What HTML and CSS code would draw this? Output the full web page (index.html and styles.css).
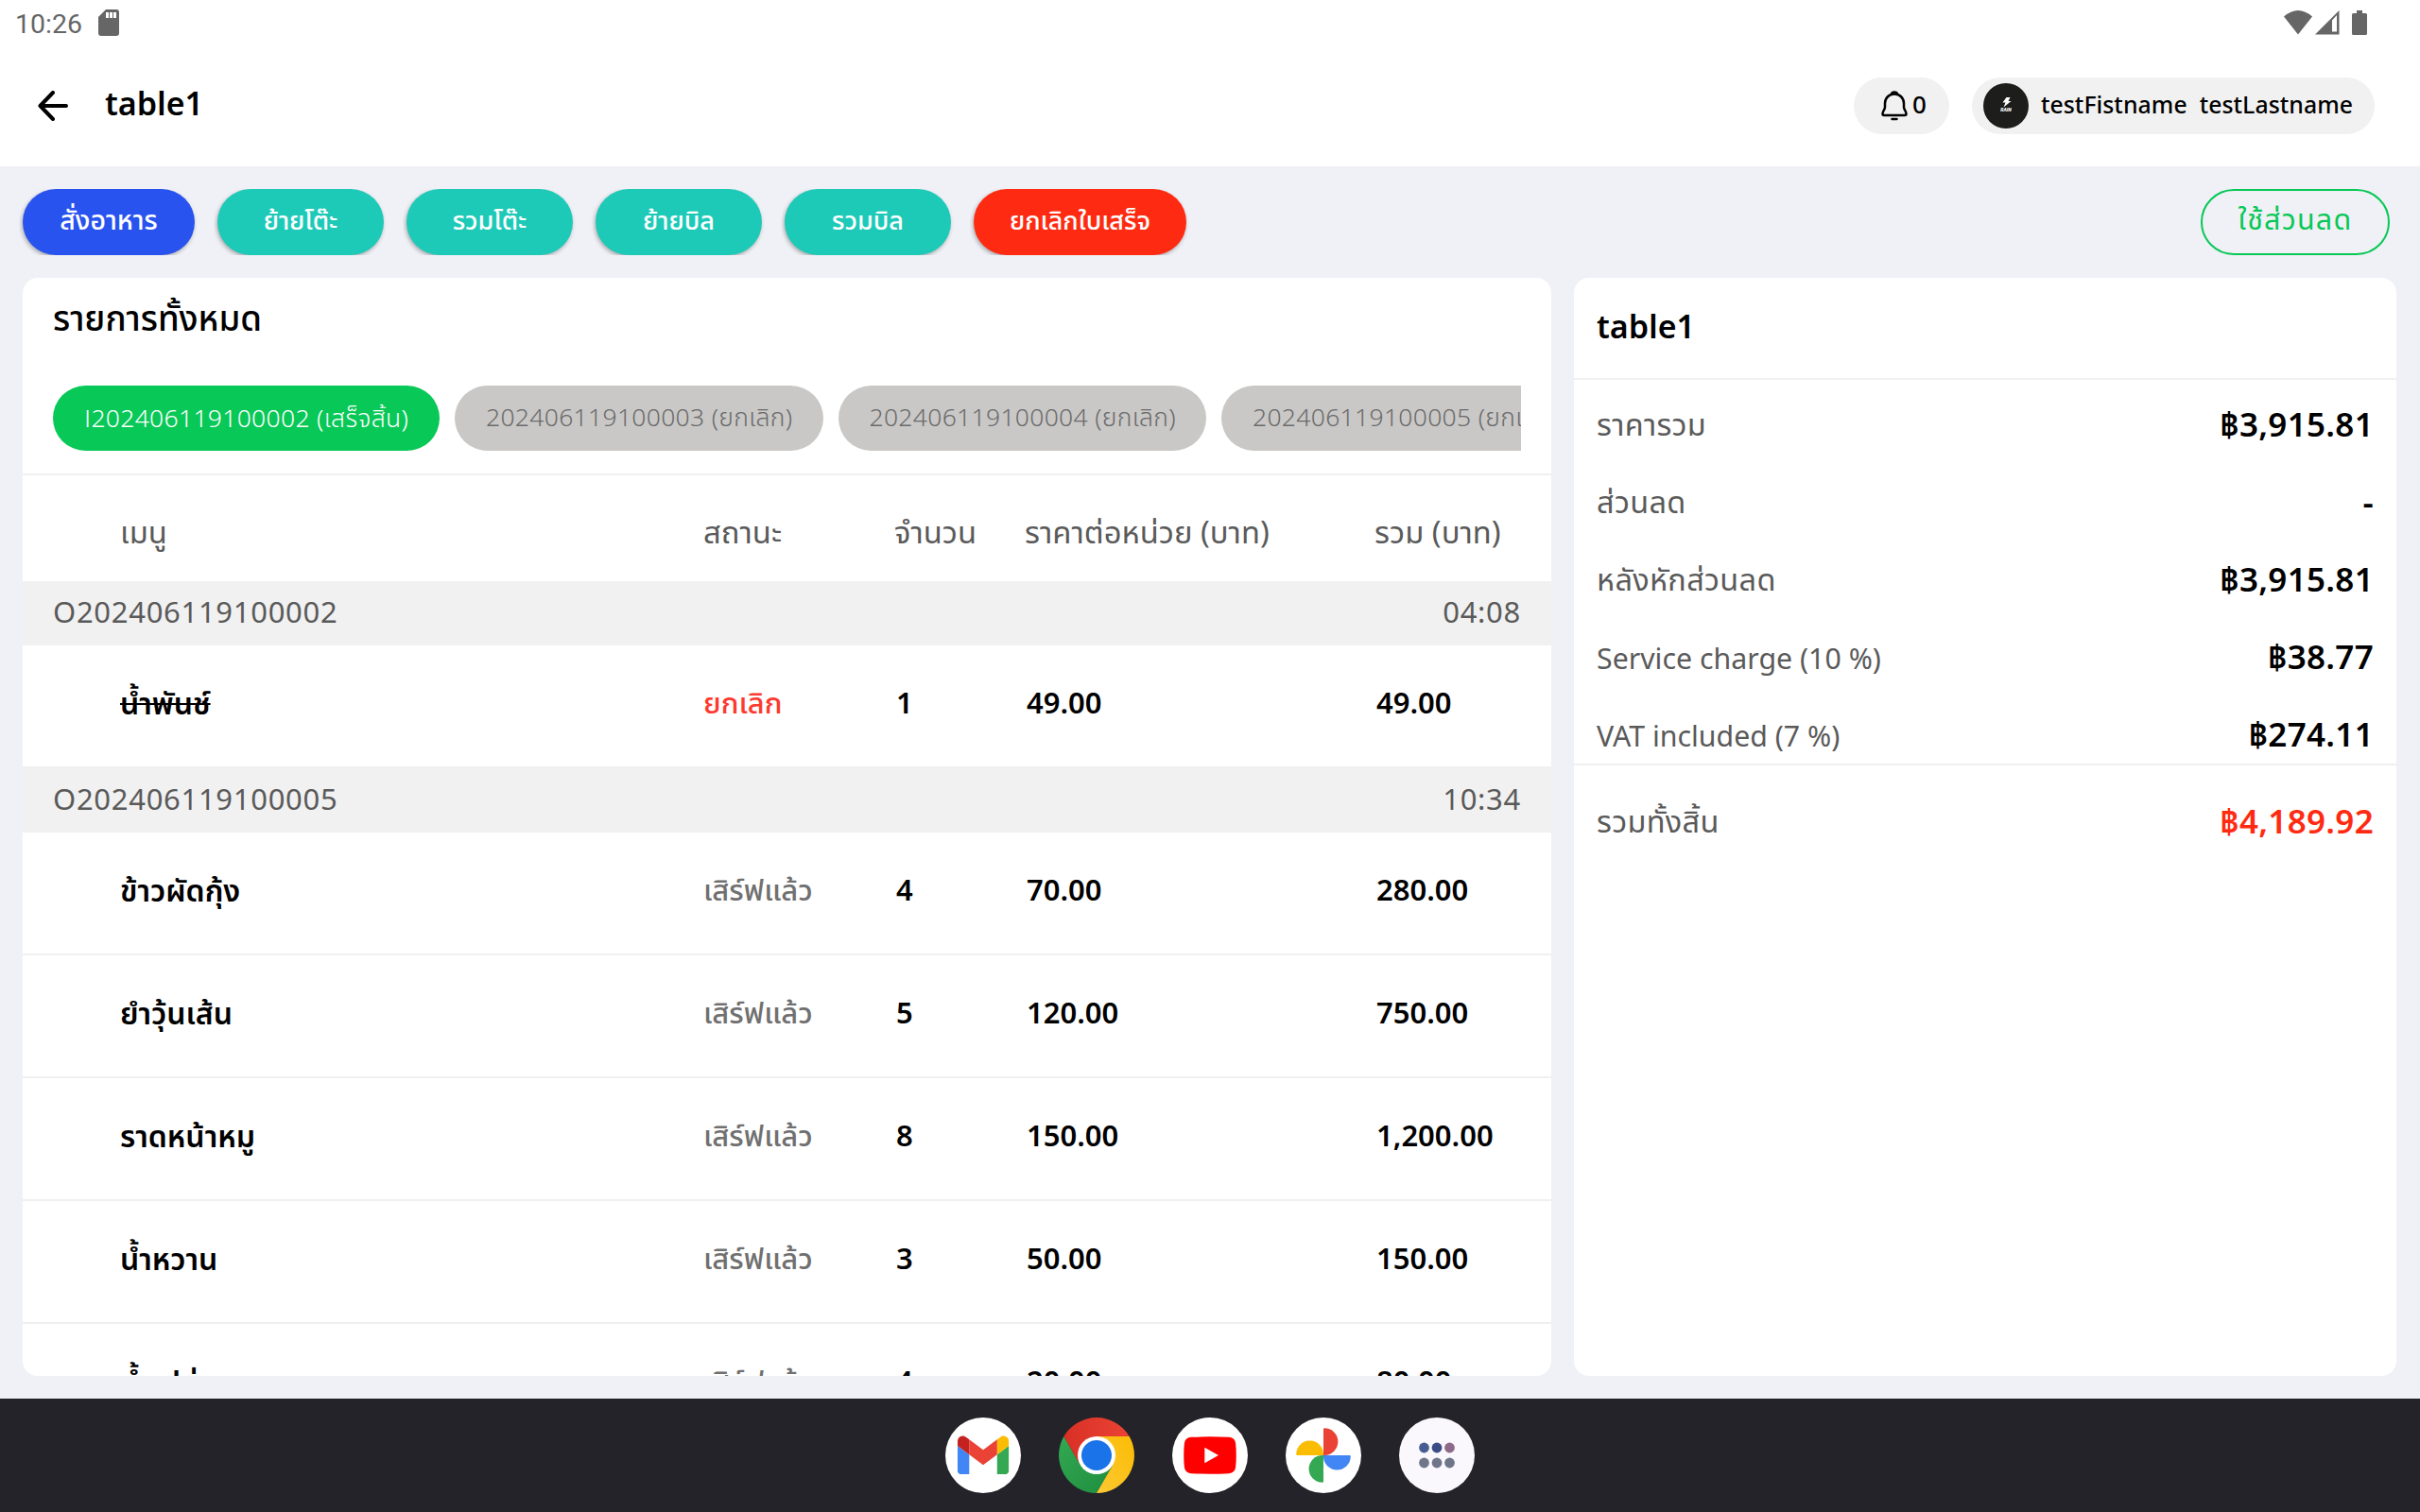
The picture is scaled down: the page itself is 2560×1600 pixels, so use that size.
FILE: index.html
```html
<!DOCTYPE html>
<html lang="th">
<head>
<meta charset="utf-8">
<title>table1</title>
<link rel="stylesheet" href="styles.css">
</head>
<body>
<div class="screen">
  <div class="statusbar">
    <span class="clock">10:26</span>
    <svg class="sd" width="22" height="28" viewBox="0 0 22 28"><path d="M8 0H19a3 3 0 0 1 3 3V25a3 3 0 0 1-3 3H3a3 3 0 0 1-3-3V8ZM8 3v6h3V3Zm4 0v6h3V3Zm4 0v6h3V3Z" fill="#666" fill-rule="evenodd"/></svg>
    <div class="system">
      <svg width="30" height="26" viewBox="0 0 30 26"><path d="M0 6.500Q15-6.500 30 6.500L15 25.500Z" fill="#666"/></svg>
      <svg width="26" height="26" viewBox="0 0 26 26"><path d="M25.500 0V25.500H0ZM18 10.500V22.500h5V5Z" fill="#666" fill-rule="evenodd"/></svg>
      <svg class="battery" width="16" height="26" viewBox="0 0 16 26"><path d="M5 0h6v3h3.500A1.500 1.500 0 0 1 16 4.500v20a1.500 1.500 0 0 1-1.500 1.500h-13A1.500 1.500 0 0 1 0 24.500v-20A1.500 1.500 0 0 1 1.500 3H5Z" fill="#666"/></svg>
    </div>
  </div>

  <header class="appbar">
    <svg class="back" width="32" height="32" viewBox="0 0 32 32" fill="none" stroke="#000" stroke-width="4" stroke-linecap="round" stroke-linejoin="round"><path d="M30 16H2.500M16 2 2.500 16 16 30"/></svg>
    <h1 class="heading">table1</h1>
    <div class="pill bell">
      <svg width="28" height="32" viewBox="0 0 28 32" fill="none" stroke="#000" stroke-width="2.500" stroke-linecap="round" stroke-linejoin="round"><path d="M14 3.500C8.500 3.500 4 7.500 4 13.500V17.500C4 20 1.500 21.500 1.500 24.500Q1.500 26 3 26H25Q26.500 26 26.500 24.500C26.500 21.500 24 20 24 17.500V13.500C24 7.500 19.500 3.500 14 3.500Z"/><path d="M11 4Q11 1.500 14 1.500T17 4M11.500 30h5"/></svg>
      <span>0</span>
    </div>
    <div class="pill user">
      <svg width="48" height="48" viewBox="0 0 48 48"><circle cx="24" cy="24" r="24" fill="#1d1d1b"/><path d="M24.500 15h4l-2 4h3l-8 6.500 2-5h-3Z" fill="#fff"/><text x="24" y="29.800" text-anchor="middle" class="brand">RAIN</text></svg>
      <span class="name">testFistname  testLastname</span>
    </div>
  </header>

  <div class="actions">
    <div class="btn blue w182">สั่งอาหาร</div>
    <div class="btn teal w176">ย้ายโต๊ะ</div>
    <div class="btn teal w176">รวมโต๊ะ</div>
    <div class="btn teal w176">ย้ายบิล</div>
    <div class="btn teal w176">รวมบิล</div>
    <div class="btn red w225">ยกเลิกใบเสร็จ</div>
    <div class="btn outline">ใช้ส่วนลด</div>
  </div>

  <main class="content">
    <section class="card orders">
      <h2 class="title">รายการทั้งหมด</h2>
      <div class="chips">
        <div class="chip active"><span class="prefix">I</span>202406119100002 (เสร็จสิ้น)</div>
        <div class="chip">202406119100003 (ยกเลิก)</div>
        <div class="chip">202406119100004 (ยกเลิก)</div>
        <div class="chip">202406119100005 (ยกเลิก)</div>
      </div>
      <div class="grid head"><span>เมนู</span><span>สถานะ</span><span>จำนวน</span><span>ราคาต่อหน่วย (บาท)</span><span>รวม (บาท)</span></div>
      <div class="group"><span>O202406119100002</span><span>04:08</span></div>
      <div class="grid row"><span><s>น้ำพันช์</s></span><span class="cancel">ยกเลิก</span><span class="num">1</span><span class="num">49.00</span><span class="num">49.00</span></div>
      <div class="group"><span>O202406119100005</span><span>10:34</span></div>
      <div class="grid row"><span>ข้าวผัดกุ้ง</span><span class="served">เสิร์ฟแล้ว</span><span class="num">4</span><span class="num">70.00</span><span class="num">280.00</span></div>
      <div class="grid row"><span>ยำวุ้นเส้น</span><span class="served">เสิร์ฟแล้ว</span><span class="num">5</span><span class="num">120.00</span><span class="num">750.00</span></div>
      <div class="grid row"><span>ราดหน้าหมู</span><span class="served">เสิร์ฟแล้ว</span><span class="num">8</span><span class="num">150.00</span><span class="num">1,200.00</span></div>
      <div class="grid row"><span>น้ำหวาน</span><span class="served">เสิร์ฟแล้ว</span><span class="num">3</span><span class="num">50.00</span><span class="num">150.00</span></div>
      <div class="grid row"><span>น้ำเปล่า</span><span class="served">เสิร์ฟแล้ว</span><span class="num">4</span><span class="num">20.00</span><span class="num">80.00</span></div>
    </section>

    <aside class="card summary">
      <h2 class="heading table-name">table1</h2>
      <div class="lines">
        <div class="line"><span>ราคารวม</span><b>฿3,915.81</b></div>
        <div class="line"><span>ส่วนลด</span><b>-</b></div>
        <div class="line"><span>หลังหักส่วนลด</span><b>฿3,915.81</b></div>
        <div class="line"><span class="latin">Service charge (10 %)</span><b>฿38.77</b></div>
        <div class="line"><span class="latin">VAT included (7 %)</span><b>฿274.11</b></div>
      </div>
      <div class="line total"><span>รวมทั้งสิ้น</span><b>฿4,189.92</b></div>
    </aside>
  </main>

  <nav class="dock">
    <svg width="80" height="80" viewBox="0 0 80 80"><circle cx="40" cy="40" r="40" fill="#fff"/><g transform="translate(-19 -6.300) scale(.615)"><path fill="#4285f4" d="M58 108h14V74L52 59v43c0 3.320 2.690 6 6 6"/><path fill="#34a853" d="M120 108h14c3.320 0 6-2.690 6-6V59l-20 15"/><path fill="#fbbc04" d="M120 48v26l20-15v-8c0-7.420-8.470-11.650-14.400-7.200"/><path fill="#ea4335" d="M72 74V48l24 18 24-18v26L96 92"/><path fill="#c5221f" d="M52 51v8l20 15V48l-5.600-4.200c-5.940-4.450-14.400-.22-14.400 7.200"/></g></svg>
    <svg width="80" height="80" viewBox="0 0 80 80">
      <defs>
        <linearGradient id="cr"><stop offset="0" stop-color="#d93025"/><stop offset="1" stop-color="#ea4335"/></linearGradient>
        <linearGradient id="cy" x1="0" y1="1" x2="1" y2="0"><stop offset="0" stop-color="#fcc934"/><stop offset="1" stop-color="#fbbc04"/></linearGradient>
        <linearGradient id="cg" x1="1" y1="1" x2="0" y2="0"><stop offset="0" stop-color="#1e8e3e"/><stop offset="1" stop-color="#34a853"/></linearGradient>
      </defs>
      <path d="M5.400 20 22.700 50 40 60 57.300 50 40 80A40 40 0 0 1 5.400 20Z" fill="url(#cg)"/>
      <path d="M74.600 20A40 40 0 0 1 40 80L57.300 50 40 40V20Z" fill="url(#cy)"/>
      <path d="M5.400 20A40 40 0 0 1 74.600 20H40V40L22.700 50Z" fill="url(#cr)"/>
      <circle cx="40" cy="40" r="20" fill="#fff"/><circle cx="40" cy="40" r="16" fill="#1a73e8"/>
    </svg>
    <svg width="80" height="80" viewBox="0 0 80 80"><circle cx="40" cy="40" r="40" fill="#fff"/><path d="M20 20.800Q40 19.800 60 20.800Q66.500 21.200 67.200 28Q68.300 40 67.200 52Q66.500 58.800 60 59.200Q40 60.200 20 59.200Q13.500 58.800 12.800 52Q11.700 40 12.800 28Q13.500 21.200 20 20.800Z" fill="red"/><path d="M34.300 31.700 49 40 34.300 48.300Z" fill="#fff"/></svg>
    <svg width="80" height="80" viewBox="0 0 80 80"><circle cx="40" cy="40" r="40" fill="#fff"/><path d="M40 40V12.200a1 1 0 0 1 1-1A14.400 14.400 0 0 1 41 40Z" fill="#ea4335"/><path d="M40 40H67.800a1 1 0 0 1 1 1A14.400 14.400 0 0 1 40 41Z" fill="#4285f4"/><path d="M40 40V67.800a1 1 0 0 1-1 1A14.400 14.400 0 0 1 39 40Z" fill="#34a853"/><path d="M40 40H12.200a1 1 0 0 1-1-1A14.400 14.400 0 0 1 40 39Z" fill="#fbbc04"/></svg>
    <svg width="80" height="80" viewBox="0 0 80 80"><circle cx="40" cy="40" r="40" fill="#faf8fd"/><g fill="#6f768a"><circle cx="26.500" cy="32" r="5.400" fill="#475d92"/><circle cx="40" cy="32" r="5.400" fill="#3b4d84"/><circle cx="53.500" cy="32" r="5.400" fill="#8c6a88"/><circle cx="26.500" cy="48" r="5.400"/><circle cx="40" cy="48" r="5.400"/><circle cx="53.500" cy="48" r="5.400"/></g></svg>
  </nav>
</div>
</body>
</html>
```
FILE: styles.css
```css
* { box-sizing: border-box; }
body {
  margin: 0;
  font-family: "Noto Sans Thai", "Noto Sans", sans-serif;
  color: #000;
}
h1, h2 { margin: 0; }
svg { display: block; flex: none; }

.screen {
  width: 2560px;
  height: 1600px;
  display: flex;
  flex-direction: column;
  background: #f0f1f6;
  overflow: hidden;
}

/* system status bar */
.statusbar {
  height: 48px;
  padding: 0 56px 0 16px;
  display: flex;
  align-items: center;
  background: #fff;
}
.clock { font: 28.500px/48px Roboto, sans-serif; color: #666; width: 88px; padding-top: 4px; }
.system { margin-left: auto; display: flex; gap: 3px; }
.battery { margin-left: 10px; }

/* app bar */
.appbar {
  height: 128px;
  padding: 0 48px 0 40px;
  display: flex;
  align-items: center;
  background: #fff;
}
.heading { font-size: 34px; font-weight: 600; letter-spacing: 0; line-height: 48px; }
.appbar .heading { margin-left: 39px; flex: 1; }
.pill {
  height: 60px;
  border-radius: 30px;
  background: #f1f1f1;
  display: flex;
  align-items: center;
}
.bell { width: 101px; padding-left: 29px; gap: 5px; font-size: 26px; font-weight: 500; margin-right: 24px; }
.user { width: 426px; padding-left: 12px; gap: 13px; }
.name { font-size: 24.800px; font-weight: 500; white-space: pre; letter-spacing: 0.050px; }
.brand { font: italic 900 5px Roboto, sans-serif; fill: #fff; }

/* action buttons */
.actions { display: flex; padding: 24px 32px 24px 24px; gap: 24px; }
.btn {
  height: 70px;
  border-radius: 35px;
  text-align: center;
  line-height: 69px;
  font-size: 27px;
  font-weight: 500;
  color: #fff;
  box-shadow: -1px 2px 4px rgba(0, 0, 0, 0.3);
  clip-path: inset(0 -4px);
}
.w182 { width: 182px; font-size: 28.500px; }
.w176 { width: 176px; }
.w225 { width: 225px; }
.blue { background: #2853ee; }
.teal { background: #1dcab8; }
.red { background: #fe2b12; }
.outline {
  width: 200px;
  margin-left: auto;
  border: 2px solid #08c857;
  color: #08c857;
  line-height: 64px;
  font-size: 30.500px;
  font-weight: 400;
  letter-spacing: 1.200px;
  box-shadow: none;
}

/* cards */
.content { display: flex; gap: 24px; padding: 0 25px 0 24px; height: 1162px; }
.card { background: #fff; border-radius: 16px; overflow: hidden; }
.orders { width: 1617px; }
.summary { flex: 1; }

.title { padding: 0 32px; height: 114px; line-height: 90px; font-size: 36.600px; font-weight: 500; }
.chips {
  display: flex;
  gap: 16px;
  margin: 0 32px;
  padding-bottom: 24px;
  overflow: hidden;
}
.chip {
  flex: none;
  width: 389.500px;
  height: 69px;
  line-height: 70px;
  border-radius: 35px;
  padding-left: 33px;
  background: #c9c8c6;
  color: #6b6b6b;
  font-size: 26.500px;
  font-weight: 300;
  letter-spacing: 0.300px;
  white-space: nowrap;
}
.chip.active { width: 409px; background: #08c857; color: #fff; }
.prefix { font-family: Roboto, sans-serif; }

.grid {
  display: grid;
  grid-template-columns: 617px 202px 138px 370px 1fr;
  padding-left: 103px;
  white-space: nowrap;
  align-items: center;
}
.head {
  height: 114px;
  padding-top: 12px;
  border-top: 2px solid #f0f0f0;
  font-size: 32.800px;
  color: #5a5a5a;
}
.group {
  height: 68px;
  padding: 0 32px;
  display: flex;
  justify-content: space-between;
  line-height: 69px;
  background: #f1f1f1;
  color: #5a5a5a;
  font-size: 31px;
  letter-spacing: 0.700px;
}
.row { height: 130px; padding-bottom: 3px; border-bottom: 2px solid #f0f0f0; font-size: 32px; font-weight: 600; }
.row s { text-decoration-thickness: 2px; }
.num { font-size: 31px; padding-left: 2px; }
.cancel { color: #fb3b30; font-size: 31px; font-weight: 500; }
.served { color: #707070; font-size: 31px; font-weight: 500; }

/* bill summary */
.table-name { height: 108px; line-height: 107px; padding-left: 24px; border-bottom: 2px solid #f0f0f0; }
.lines {
  display: flex;
  flex-direction: column;
  gap: 28px;
  padding: 23px 0 1px;
  border-bottom: 2px solid #f0f0f0;
}
.line {
  display: flex;
  justify-content: space-between;
  height: 54px;
  line-height: 54px;
  padding: 0 24px;
  font-size: 32.500px;
  letter-spacing: 0.300px;
  color: #5a5a5a;
}
.line b { font-size: 35px; font-weight: 600; letter-spacing: 0.300px; color: #000; }
.line .latin { font-size: 30.300px; letter-spacing: 0; line-height: 56px; }
.total { margin-top: 35px; }
.total b { color: #fe2b12; }

/* launcher dock */
.dock {
  margin-top: auto;
  height: 120px;
  background: #242329;
  display: flex;
  justify-content: center;
  align-items: center;
  gap: 40px;
}
```
